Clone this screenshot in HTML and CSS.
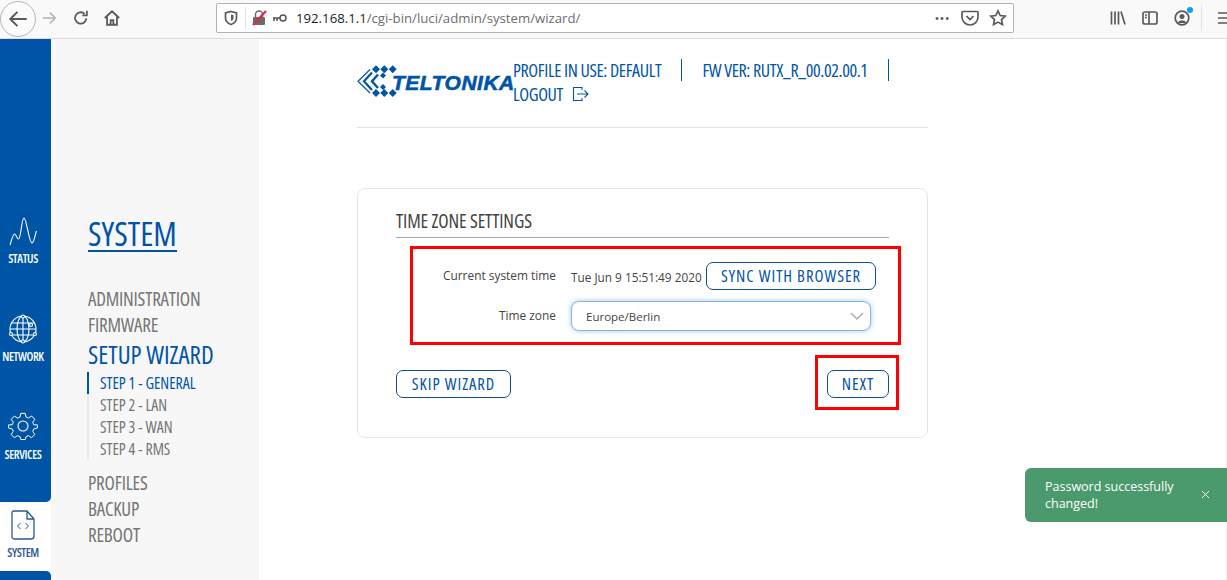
FILE: index.html
```html
<!DOCTYPE html>
<html lang="en">
<head>
<meta charset="utf-8">
<title>Setup wizard</title>
<link rel="stylesheet" href="styles.css">
</head>
<body>
<header class="toolbar">
  <nav class="nav-buttons">
    <span class="back-circle"><svg width="22" height="22" viewBox="0 0 20 20" class="ico back-ico"><path d="M18 10H3M9.500 3.500L3 10l6.500 6.500"/></svg></span>
    <svg width="18" height="18" viewBox="0 0 20 20" class="ico ico-dim"><path d="M3 10h14M11 4l6 6-6 6"/></svg>
    <svg width="18" height="18" viewBox="0 0 20 20" class="ico reload"><path d="M16 10.500a6.300 6.300 0 1 1-2-5.200M16.500 2v5h-5"/></svg>
    <svg width="18" height="18" viewBox="0 0 20 20" class="ico home"><path d="M2 10l8-7.500 8 7.500M4.500 8.500V17.500h11V8.500M8.500 17.500v-5h3v5"/></svg>
  </nav>
  <div class="urlbar">
    <svg width="14" height="16" viewBox="0 0 14 16" class="ico shield"><path d="M7 1.500l5.500 1.500v5c0 3-2.500 5.500-5.500 6.500C4 13.500 1.500 11 1.500 8V3z"/><path d="M7 4.500l2.500.7v2.800c0 1.300-1 2.400-2.500 3z" class="fill"/></svg>
    <span class="url-sep"></span>
    <svg width="15" height="16" viewBox="0 0 15 16" class="lock"><rect x="1" y="7" width="12" height="8" rx="1" fill="#6b6b6b"/><path d="M3.500 7V4.500a3.500 3.500 0 0 1 7 0V7" fill="none" stroke="#6b6b6b" stroke-width="1.500"/><path d="M1 15L14 1" stroke="#e0264a" stroke-width="2.200"/></svg>
    <svg width="15" height="8" viewBox="0 0 15 8" class="key"><circle cx="11" cy="4" r="3" fill="none" stroke="#555" stroke-width="1.500"/><path d="M8 4H1M2 4v3M5 4v3" stroke="#555" stroke-width="1.500" fill="none"/></svg>
    <span class="url"><b>192.168.1.1</b>/cgi-bin/luci/admin/system/wizard/</span>
    <span class="url-dots">•••</span>
    <svg width="18" height="16" viewBox="0 0 18 16" class="ico pocket"><path d="M2 1.500h14a1 1 0 0 1 1 1V7a8 8 0 0 1-16 0V2.500a1 1 0 0 1 1-1zM5.500 6L9 9.500 12.500 6"/></svg>
    <svg width="18" height="18" viewBox="0 0 18 18" class="ico star"><path d="M9 1.800l2.200 4.700 5 .6-3.700 3.500 1 5L9 13.100l-4.500 2.500 1-5L1.800 7.100l5-.6z"/></svg>
  </div>
  <div class="tools">
    <svg width="16" height="16" viewBox="0 0 16 16" class="ico tool-lib"><path d="M1.500 1.500v13M5 1.500v13M8.500 1.500v13M11 1.500l4 13"/></svg>
    <svg width="16" height="16" viewBox="0 0 16 16" class="ico tool-side"><rect x="1" y="2" width="14" height="12" rx="2"/><path d="M7 2v12"/><path d="M3 5h2M3 7.500h2"/></svg>
    <span class="account">
      <svg width="16" height="16" viewBox="0 0 16 16" class="ico"><circle cx="8" cy="8" r="6.800"/><circle cx="8" cy="6.500" r="2.500" class="fill"/><path d="M3.500 13a5 5 0 0 1 9 0z" class="fill"/></svg>
      <i class="account-dot"></i>
    </span>
    <span class="tool-sep"></span>
    <svg width="16" height="16" viewBox="0 0 16 16" class="ico"><path d="M1 3h14M1 8h14M1 13h14"/></svg>
  </div>
</header>

<div class="app">
  <aside class="rail">
    <div class="rail-blue">
      <a class="rail-item">
        <svg width="30" height="30" viewBox="0 0 30 30" class="rail-ico"><path d="M2 29C3 26 5 18 6.500 18C8 18 9 23 10.500 23C13 23 13.500 2 16 2C18.500 2 21 27 24 27C26 27 27 19 28.500 15"/></svg>
        <span>STATUS</span>
      </a>
      <a class="rail-item">
        <svg width="30" height="30" viewBox="0 0 30 30" class="rail-ico"><circle cx="15" cy="15" r="13"/><ellipse cx="15" cy="15" rx="6" ry="13"/><path d="M15 2v26M4 9h22M2 15h26M4 21h22"/><g class="net-nodes"><circle cx="15" cy="2.500" r="1.500"/><circle cx="15" cy="27.500" r="1.500"/><circle cx="3" cy="20" r="1.500"/><circle cx="27" cy="20" r="1.500"/><circle cx="23" cy="11" r="1.500"/></g></svg>
        <span>NETWORK</span>
      </a>
      <a class="rail-item">
        <svg width="32" height="32" viewBox="0 0 32 32" class="rail-ico gear"><circle cx="16" cy="16" r="5"/><path d="M13.500 2h5l.8 4 2.800 1.200 3.400-2.300 3.600 3.600-2.300 3.400L28 14.700l4 0v3.600l-4 .9-1.200 2.800 2.300 3.400-3.600 3.600-3.400-2.300-2.800 1.200-.8 3.100h-5l-.8-3.100-2.800-1.200-3.400 2.300-3.600-3.600 2.300-3.400L4 19.200l-4-.9v-3.600l4 0 1.200-2.800-2.300-3.400 3.600-3.600 3.400 2.300 2.800-1.200z" transform="translate(1.600 1.600) scale(.9)"/></svg>
        <span>SERVICES</span>
      </a>
    </div>
    <a class="rail-item rail-current">
      <svg width="24" height="30" viewBox="0 0 24 30" class="rail-ico"><path d="M3 1h13l7 8v17a3 3 0 0 1-3 3H3a2 2 0 0 1-2-2V3a2 2 0 0 1 2-2zM16 1v8h7"/><path d="M9.500 13l-3 3 3 3M14.500 13l3 3-3 3" class="thin"/></svg>
      <span>SYSTEM</span>
    </a>
    <div class="rail-next"></div>
  </aside>

  <nav class="menu">
    <h1 class="menu-title"><span>SYSTEM</span></h1>
    <ul class="menu-list">
      <li>ADMINISTRATION</li>
      <li>FIRMWARE</li>
      <li class="menu-open">SETUP WIZARD</li>
    </ul>
    <ul class="steps">
      <li class="step-active">STEP 1 - GENERAL</li>
      <li>STEP 2 - LAN</li>
      <li>STEP 3 - WAN</li>
      <li>STEP 4 - RMS</li>
    </ul>
    <ul class="menu-list">
      <li>PROFILES</li>
      <li>BACKUP</li>
      <li>REBOOT</li>
    </ul>
  </nav>

  <main class="main">
    <div class="page-head">
      <div class="logo">
        <svg width="36" height="32" viewBox="0 0 36 32" class="logo-mark">
          <path fill="#0054a6" d="M15 3.300l4-4 4 4-4 4zM23.300 3.300l4-4 4 4-4 4zM31.700 3.300l4-4 4 4-4 4zM15 27l4-4 4 4-4 4zM23.300 27l4-4 4 4-4 4zM31.700 27l4-4 4 4-4 4zM23 9.500l3-3 3 3-3 3zM23 21l3-3 3 3-3 3z"/>
          <path d="M13 3.500L1 15.300 13 27" fill="none" stroke="#0054a6" stroke-width="1.200"/>
          <path d="M15 6.500L7 15.300l8 8.700" fill="none" stroke="#0054a6" stroke-width="2.200"/>
          <path d="M21 8.500L15 15.300l6 6.700" fill="none" stroke="#0054a6" stroke-width="2.400"/>
        </svg>
        <span class="logo-text">TELTONIKA</span>
      </div>
      <div class="head-info">
        <div class="head-row">
          <span class="head-cell">PROFILE IN USE: DEFAULT</span>
          <span class="head-cell">FW VER: RUTX_R_00.02.00.1</span>
        </div>
        <div class="head-row logout">
          <span>LOGOUT</span>
          <svg width="17" height="16" viewBox="0 0 17 16" class="logout-ico"><path d="M10 4V1.500H1.500v13H10V12M5 8h11M12.500 4.500L16 8l-3.500 3.500"/></svg>
        </div>
      </div>
    </div>

    <section class="card">
      <h2 class="card-title">TIME ZONE SETTINGS</h2>
      <div class="form">
        <div class="form-row">
          <label class="form-label label-time">Current system time</label>
          <span class="time-value">Tue Jun 9 15:51:49 2020</span>
          <button class="btn btn-sync">SYNC WITH BROWSER</button>
        </div>
        <div class="form-row form-row-zone">
          <label class="form-label">Time zone</label>
          <div class="select">
            <span>Europe/Berlin</span>
            <svg width="14" height="8" viewBox="0 0 14 8" class="chevron"><path d="M1 1l6 6 6-6"/></svg>
          </div>
        </div>
        <div class="mark mark-form"></div>
      </div>
      <div class="actions">
        <button class="btn btn-skip">SKIP WIZARD</button>
        <button class="btn btn-next">NEXT<i class="mark mark-next"></i></button>
      </div>
    </section>
  </main>
</div>

<div class="toast">
  <span class="toast-text">Password successfully changed!</span>
  <svg width="9" height="9" viewBox="0 0 9 9" class="toast-close"><path d="M1 1l7 7M8 1L1 8"/></svg>
</div>
</body>
</html>
```
FILE: styles.css
```css
* { box-sizing: border-box; }
html, body { margin: 0; height: 100%; }
body {
  width: 1227px; height: 580px; overflow: hidden; position: relative;
  font-family: "Open Sans", sans-serif; background: #fff; color: #444;
  display: flex; flex-direction: column;
}
ul { list-style: none; margin: 0; padding: 0; }
h1, h2 { margin: 0; font-weight: 400; }
svg { display: block; flex: none; }

/* browser toolbar */
.toolbar {
  height: 39px; flex: none; background: #f9f9fa; border-bottom: 1px solid #dcdcde;
  display: flex; align-items: center; padding: 0 0 3px 1px;
}
.ico { fill: none; stroke: #5a5a5e; stroke-width: 1.700; }
.ico .fill { fill: #5a5a5e; stroke: none; }
.ico-dim { stroke: #b3b3b6; }
.back-ico { stroke-width: 1.800; }
.nav-buttons { display: flex; align-items: center; width: 215px; flex: none; }
.back-circle {
  width: 36px; height: 36px; border: 1px solid #b5b5b8; border-radius: 50%; background: #fbfbfb;
  display: flex; align-items: center; justify-content: center; margin-top: 2px; margin-left: -1px; flex: none;
}
.nav-buttons .ico-dim { margin-left: 4px; }
.nav-buttons .reload { margin-left: 14px; stroke-width: 2; }
.nav-buttons .home { margin-left: 13px; stroke-width: 2; }
.urlbar {
  width: 798px; height: 30px; flex: none; background: #fff; border: 1px solid #b1b1b3; border-radius: 2px;
  display: flex; align-items: center; padding: 0 6px 0 7px; font-size: 13.200px; white-space: nowrap;
}
.url-sep { width: 1px; height: 22px; background: #e2e2e3; margin: 0 6px 0 7px; }
.lock { margin-right: 5px; }
.key { margin-right: 9px; }
.url { color: #6d6d70; flex: 1; }
.url b { font-weight: 400; color: #1d1d1f; }
.url-dots { color: #5a5a5e; font-size: 13px; letter-spacing: .3px; margin-right: 11px; }
.pocket { margin-right: 10px; }
.tools { display: flex; align-items: center; margin-left: 96px; }
.tool-lib { margin-right: 16px; }
.tool-side { margin-right: 16px; }
.account { position: relative; display: block; }
.account-dot { position: absolute; top: -3px; right: -3px; width: 6px; height: 6px; border-radius: 50%; background: #0a9ff5; }
.tool-sep { width: 1px; height: 26px; background: #e2e2e3; margin: 0 15px 0 11px; }

/* page frame */
.app { flex: 1; min-height: 0; display: flex; }

/* icon rail */
.rail { width: 51px; flex: none; display: flex; flex-direction: column; background: #f7f7f8; }
.rail-blue {
  background: #0054a6; height: 463px; padding-top: 169px;
  border-bottom-right-radius: 5px;
}
.rail-item {
  height: 98px; display: flex; flex-direction: column; align-items: center; justify-content: flex-end;
  padding: 0 5px 40px 0; color: #fff; position: relative;
  font-stretch: 75%; font-size: 12px; font-weight: 600; letter-spacing: -.400px;
}
.rail-item span { line-height: 14px; margin-top: 6px; white-space: nowrap; }
.rail-ico { fill: none; stroke: #fff; stroke-width: 1.100; stroke-linejoin: round; }
.net-nodes circle { fill: #0054a6; }
.rail-current {
  height: 69px; background: #fff; color: #2a5a90; padding-bottom: 11px;
}
.rail-current .rail-ico { stroke: #2a5a90; stroke-width: 1.300; }
.rail-current .thin { stroke-width: 1; }
.rail-next { flex: 1; background: #0054a6; border-top-right-radius: 5px; }

/* section menu */
.menu {
  width: 208px; flex: none; background: #f7f7f8; padding: 178px 0 0 37px;
  font-stretch: 75%; color: #757575; white-space: nowrap;
}
.menu-title { font-size: 33px; line-height: 33px; color: #0054a6; margin-bottom: 34px; }
.menu-title span { border-bottom: 2px solid #0054a6; display: inline-block; }
.menu-list li { font-size: 19px; line-height: 26px; font-weight: 500; letter-spacing: -.200px; }
.menu-list .menu-open { font-size: 25px; line-height: 32px; color: #0054a6; letter-spacing: 0; }
.steps { border-left: 2px solid #e8e8ea; margin: 2px 0 10px -1px; position: relative; }
.steps li { font-size: 15.800px; line-height: 22px; padding-left: 11px; position: relative; font-weight: 500; }
.steps .step-active { color: #0054a6; }
.steps .step-active::before {
  content: ""; position: absolute; left: -2px; top: 0; bottom: 0; width: 2px; background: #0054a6;
}

/* main column */
.main { flex: 1; padding-left: 98px; border-right: 1px solid #eee; }
.page-head {
  width: 571px; height: 89px; border-bottom: 1px solid #e4e4e4;
  display: flex; padding-top: 20px;
}
.logo { display: flex; align-items: flex-start; width: 156px; flex: none; position: relative; padding-top: 7px; }
.logo-mark { overflow: visible; }
.logo-text {
  font: italic 700 21px/1 "Liberation Sans", sans-serif; color: #0054a6;
  margin: 6px 0 0 -1px; -webkit-text-stroke: .6px #0054a6; letter-spacing: .500px;
}
.head-info { font-stretch: 75%; color: #0054a6; font-size: 18px; letter-spacing: -.350px; margin-top: -1px; }
.head-row { display: flex; height: 24px; align-items: center; white-space: nowrap; }
.head-cell { border-right: 1px solid #0054a6; padding-right: 20px; margin-right: 20px; line-height: 22px; }
.logout { gap: 9px; }
.logout-ico { fill: none; stroke: #0054a6; stroke-width: 1.100; }

/* card */
.card {
  width: 571px; height: 250px; margin-top: 60px; border: 1px solid #e6e6e6; border-radius: 8px;
  padding: 15px 38px 0; position: relative;
}
.card-title {
  font-size: 19px; line-height: 35px; font-stretch: 75%; font-weight: 500; color: #444;
  border-bottom: 1px solid #a8a8a8; height: 34px; letter-spacing: -.100px;
}
.form { position: relative; padding-top: 24px; height: 132px; }
.form-row { display: flex; align-items: center; height: 28px; }
.form-row-zone { margin-top: 11px; height: 30px; }
.form-label { width: 160px; text-align: right; font-size: 11.900px; color: #444; flex: none; margin-right: 15px; padding-bottom: 2px; }
.label-time { padding-bottom: 2px; }
.time-value { font-size: 11.800px; color: #444; width: 135px; flex: none; white-space: nowrap; padding-top: 2px; }
.select {
  width: 300px; height: 30px; border: 1px solid #85b7e5; border-radius: 8px;
  box-shadow: 0 0 5px rgba(70, 150, 225, .55); background: #fff;
  display: flex; align-items: center; justify-content: space-between; padding: 0 6px 0 14px;
  font-size: 11.500px; color: #444;
}
.chevron { fill: none; stroke: #a8a8a8; stroke-width: 1.300; }
.btn {
  height: 28px; border: 1px solid #0f4d8c; border-radius: 7px; background: #fff; color: #0054a6;
  font-family: "Open Sans", sans-serif; font-stretch: 75%; font-size: 16.500px; line-height: 1; font-weight: 500;
  letter-spacing: 1px; padding: 0; white-space: nowrap;
}
.btn-sync { width: 170px; }
.btn-skip { width: 115px; }
.actions { display: flex; justify-content: space-between; }
.btn-next { width: 62px; position: relative; }

/* red annotation boxes */
.mark { position: absolute; border: 3px solid #f00; display: block; pointer-events: none; }
.mark-form { left: 14px; top: 8px; width: 491px; height: 99px; }
.mark-next { left: -13px; top: -16px; width: 84px; height: 55px; }

/* toast */
.toast {
  position: absolute; right: 0; top: 468px; width: 202px; height: 54px; background: #4a9a6e;
  border-radius: 6px 0 0 6px; color: #fff; font-size: 12.500px; line-height: 17px;
  display: flex; align-items: center; padding: 0 17px 0 20px;
}
.toast-text { width: 145px; flex: none; }
.toast-close { margin: 0 0 2px auto; fill: none; stroke: #fff; stroke-width: 1; }
```
